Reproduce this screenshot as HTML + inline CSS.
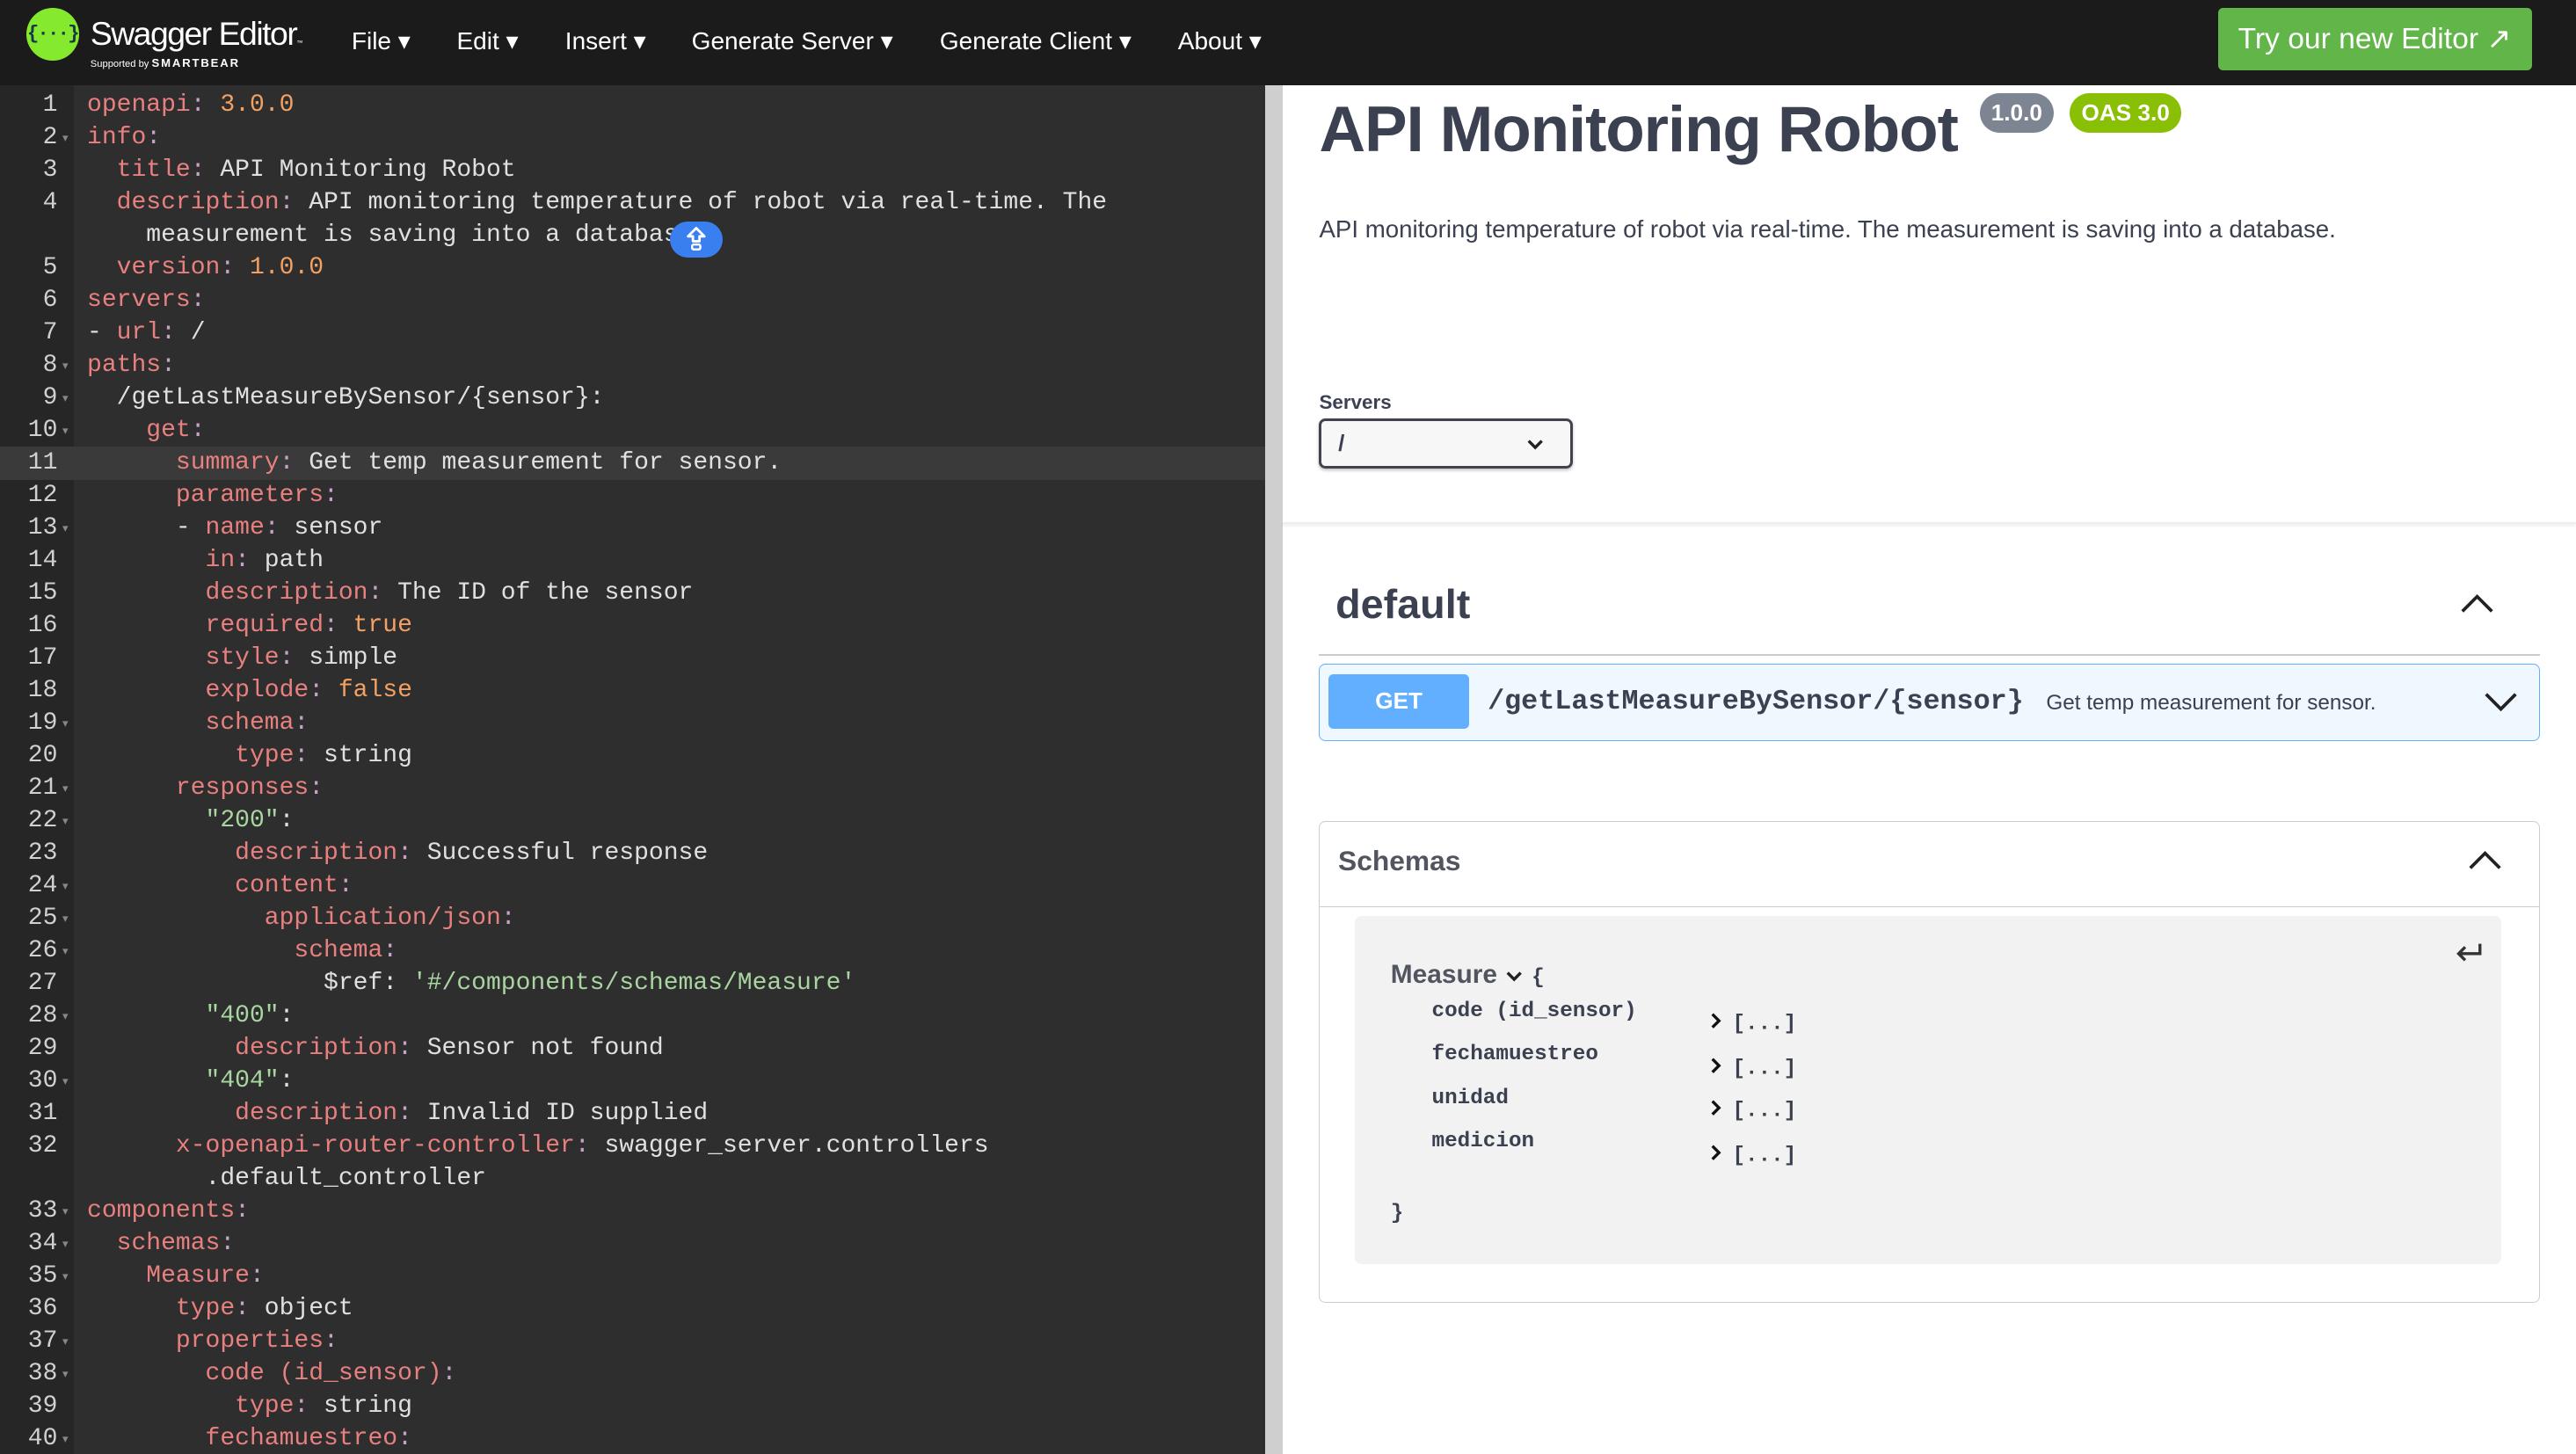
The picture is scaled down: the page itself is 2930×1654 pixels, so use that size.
<!DOCTYPE html>
<html><head><meta charset="utf-8">
<style>
html,body{margin:0;padding:0;background:#fff;overflow:hidden;width:2930px;height:1654px}
#w{zoom:1.8686;width:1568px;height:885px;position:relative;font-family:"Liberation Sans",sans-serif}
.nav{position:absolute;left:0;top:0;width:1568px;height:52px;background:#1b1b1b}
.logo{position:absolute;left:16px;top:5px;width:32px;height:32px;border-radius:50%;background:#85ea2d;color:#173647;font:bold 12px "Liberation Mono",monospace;text-align:center;line-height:32px;letter-spacing:-1px}
.brand{position:absolute;left:55px;top:9px;color:#fff;font-size:20px;letter-spacing:-.8px}
.sup{position:absolute;left:55px;top:34px;color:#fff;font-size:6px}
.sup b{font-size:7px;letter-spacing:1px}
.menu{position:absolute;top:16px;color:#fff;font-size:15px}
.try{position:absolute;left:1350px;top:5px;width:191px;height:38px;background:#62b548;border-radius:3px;color:#fff;font-size:18px;line-height:38px;text-align:center}
.ed{position:absolute;left:0;top:52px;width:770px;height:833px;background:#2e2e2e;overflow:hidden}
.gut{position:absolute;left:0;top:0;width:45px;height:833px;background:#262626}
.hl{position:absolute;left:0;top:220px;width:770px;height:20px;background:#3a3a3a}
.ln{position:absolute;left:0;width:35px;text-align:right;color:#d0d0d0;font:15px "Liberation Mono",monospace}
.fa{position:absolute;left:38px;color:#888;font-size:7px}
.code{position:absolute;left:53px;color:#e0e0e0;font:15px/19.8px "Liberation Mono",monospace;white-space:pre}
.k{color:#e8807f}.p{color:#c7a3c7}.n{color:#f2a063}.s{color:#a8d5a0}
.div{position:absolute;left:770px;top:52px;width:11px;height:833px;background:#cfcfcf}
.bub{position:absolute;left:408px;top:135px;width:32px;height:22px;border-radius:11px;background:#3a7ff0}
.rt{position:absolute;left:781px;top:52px;width:787px;height:833px;background:#fff;color:#3b4151}
h1{position:absolute;left:22px;top:5px;margin:0;font-size:39px;font-weight:bold;color:#3b4151;letter-spacing:-.6px}
.bd{position:absolute;top:5px;height:24px;line-height:24px;border-radius:12px;color:#fff;font-weight:bold;font-size:14px;padding:0 7px}
.desc{position:absolute;left:22px;top:79px;font-size:14.8px}
.srvl{position:absolute;left:22px;top:186px;font-size:12px;font-weight:bold}
.sel{position:absolute;left:22px;top:203px;width:151px;height:27px;border:2px solid #41444e;border-radius:4px;background:#f7f7f7;box-shadow:0 1px 2px rgba(0,0,0,.25)}
.sep{position:absolute;left:0;top:266px;width:787px;height:1px;background:#eee;box-shadow:0 1px 2px rgba(0,0,0,.12)}
.dft{position:absolute;left:32px;top:301px;font-size:25px;font-weight:bold}
.hr{position:absolute;left:22px;top:346px;width:743px;height:1px;background:#ccc}
.op{position:absolute;left:22px;top:352px;width:742px;height:46px;border:1px solid #61affe;border-radius:4px;background:#eff7ff}
.get{position:absolute;left:5px;top:6px;width:86px;height:33px;border-radius:3px;background:#61affe;color:#fff;font-weight:bold;font-size:14px;text-align:center;line-height:33px}
.path{position:absolute;left:102px;top:13px;font:bold 17px "Liberation Mono",monospace;color:#3b4151}
.sum{position:absolute;left:442px;top:16px;font-size:13px}
.sch{position:absolute;left:22px;top:448px;width:742px;height:292px;border:1px solid #ccc;border-radius:4px}
.schh{position:absolute;left:0;top:0;width:742px;height:51px;border-bottom:1px solid #ccc}
.box{position:absolute;left:21px;top:57px;width:698px;height:212px;background:#f2f2f2;border-radius:4px}
.mono{font-family:"Liberation Mono",monospace}
.pr{position:absolute;left:47px;font:bold 13px "Liberation Mono",monospace;color:#3b4151}
.ar{position:absolute;left:216px;font:bold 13px "Liberation Mono",monospace;color:#3b4151}
.ar svg{vertical-align:-1px;margin-right:6px}
</style></head><body><div id="w">
<div class="nav">
 <div class="logo">{···}</div>
 <div class="brand">Swagger Editor<span style="font-size:4px">™</span></div>
 <div class="sup">Supported by <b>SMARTBEAR</b></div>
 <div class="menu" style="left:214px">File ▾</div>
 <div class="menu" style="left:278px">Edit ▾</div>
 <div class="menu" style="left:344px">Insert ▾</div>
 <div class="menu" style="left:421px">Generate Server ▾</div>
 <div class="menu" style="left:572px">Generate Client ▾</div>
 <div class="menu" style="left:717px">About ▾</div>
 <div class="try">Try our new Editor ↗</div>
</div>
<div class="ed">
 <div class="gut"></div>
 <div class="hl"></div>
 <div class="ln" style="top:2px;font:15px/19.8px 'Liberation Mono',monospace;white-space:pre">1
2
3
4

5
6
7
8
9
10
11
12
13
14
15
16
17
18
19
20
21
22
23
24
25
26
27
28
29
30
31
32

33
34
35
36
37
38
39
40</div>
 <div class="fa" style="top:2px;font:7px/19.8px sans-serif;white-space:pre">
▾






▾
▾
▾


▾





▾

▾
▾

▾
▾
▾

▾

▾



▾
▾
▾

▾
▾

▾</div>
<div class="code" style="top:2px"><span class="k">openapi</span><span class="p">:</span> <span class="n">3.0.0</span>
<span class="k">info</span><span class="p">:</span>
  <span class="k">title</span><span class="p">:</span> API Monitoring Robot
  <span class="k">description</span><span class="p">:</span> API monitoring temperature of robot via real-time. The
    measurement is saving into a databas
  <span class="k">version</span><span class="p">:</span> <span class="n">1.0.0</span>
<span class="k">servers</span><span class="p">:</span>
- <span class="k">url</span><span class="p">:</span> /
<span class="k">paths</span><span class="p">:</span>
  /getLastMeasureBySensor/{sensor}:
    <span class="k">get</span><span class="p">:</span>
      <span class="k">summary</span><span class="p">:</span> Get temp measurement for sensor.
      <span class="k">parameters</span><span class="p">:</span>
      - <span class="k">name</span><span class="p">:</span> sensor
        <span class="k">in</span><span class="p">:</span> path
        <span class="k">description</span><span class="p">:</span> The ID of the sensor
        <span class="k">required</span><span class="p">:</span> <span class="n">true</span>
        <span class="k">style</span><span class="p">:</span> simple
        <span class="k">explode</span><span class="p">:</span> <span class="n">false</span>
        <span class="k">schema</span><span class="p">:</span>
          <span class="k">type</span><span class="p">:</span> string
      <span class="k">responses</span><span class="p">:</span>
        <span class="s">"200"</span>:
          <span class="k">description</span><span class="p">:</span> Successful response
          <span class="k">content</span><span class="p">:</span>
            <span class="k">application/json</span><span class="p">:</span>
              <span class="k">schema</span><span class="p">:</span>
                $ref: <span class="s">'#/components/schemas/Measure'</span>
        <span class="s">"400"</span>:
          <span class="k">description</span><span class="p">:</span> Sensor not found
        <span class="s">"404"</span>:
          <span class="k">description</span><span class="p">:</span> Invalid ID supplied
      <span class="k">x-openapi-router-controller</span><span class="p">:</span> swagger_server.controllers
        .default_controller
<span class="k">components</span><span class="p">:</span>
  <span class="k">schemas</span><span class="p">:</span>
    <span class="k">Measure</span><span class="p">:</span>
      <span class="k">type</span><span class="p">:</span> object
      <span class="k">properties</span><span class="p">:</span>
        <span class="k">code (id_sensor)</span><span class="p">:</span>
          <span class="k">type</span><span class="p">:</span> string
        <span class="k">fechamuestreo</span><span class="p">:</span></div>
</div>
<div class="bub"><svg width="32" height="22" viewBox="0 0 32 22"><path d="M16 4 L11 9 H14 V12 H18 V9 H21 Z" fill="none" stroke="#fff" stroke-width="1.5" stroke-linejoin="round"/><rect x="13.5" y="14" width="5" height="3" rx="1" fill="none" stroke="#fff" stroke-width="1.3"/></svg></div>
<div class="div"></div>
<div class="rt">
 <h1>API Monitoring Robot</h1>
 <div class="bd" style="left:424px;background:#7d8492">1.0.0</div>
 <div class="bd" style="left:479px;background:#89bf04">OAS 3.0</div>
 <div class="desc">API monitoring temperature of robot via real-time. The measurement is saving into a database.</div>
 <div class="srvl">Servers</div>
 <div class="sel"><span style="position:absolute;left:10px;top:5px;font-size:14px;font-weight:bold">/</span><svg style="position:absolute;left:124px;top:9px" width="12" height="10" viewBox="0 0 12 10"><path d="M2 3 L6 7 L10 3" fill="none" stroke="#222" stroke-width="1.8"/></svg></div>
 <div class="sep"></div>
 <div class="dft">default</div>
 <svg style="position:absolute;left:716px;top:308px" width="22" height="14" viewBox="0 0 22 14"><path d="M2 12 L11 3 L20 12" fill="none" stroke="#222" stroke-width="2"/></svg>
 <div class="hr"></div>
 <div class="op">
  <div class="get">GET</div>
  <div class="path">/getLastMeasureBySensor/{sensor}</div>
  <div class="sum">Get temp measurement for sensor.</div>
  <svg style="position:absolute;left:708px;top:16px" width="22" height="14" viewBox="0 0 22 14"><path d="M2 2 L11 11 L20 2" fill="none" stroke="#222" stroke-width="2"/></svg>
 </div>
 <div class="sch">
  <div class="schh"><span style="position:absolute;left:11px;top:14px;font-size:17px;font-weight:bold;color:#505560">Schemas</span>
  <svg style="position:absolute;left:698px;top:16px" width="22" height="14" viewBox="0 0 22 14"><path d="M2 12 L11 3 L20 12" fill="none" stroke="#222" stroke-width="2"/></svg></div>
  <div class="box">
   <svg style="position:absolute;left:668px;top:14px" width="20" height="16" viewBox="0 0 20 16"><path d="M17 3 V9 H4 M8 5 L4 9 L8 13" fill="none" stroke="#333" stroke-width="1.8"/></svg>
   <div style="position:absolute;left:22px;top:27px;font-size:16px;font-weight:bold;color:#505560">Measure <svg width="12" height="10" viewBox="0 0 12 10" style="vertical-align:-1px"><path d="M2 3 L6 7 L10 3" fill="none" stroke="#222" stroke-width="1.8"/></svg> <span class="mono" style="font-size:13px;color:#3b4151">{</span></div>
   <div class="pr" style="top:51px">code (id_sensor)</div>
   <div class="pr" style="top:77px">fechamuestreo</div>
   <div class="pr" style="top:104px">unidad</div>
   <div class="pr" style="top:130px">medicion</div>
   <div class="ar" style="top:58px"><svg width="8" height="12" viewBox="0 0 8 12"><path d="M2 2 L6 6 L2 10" fill="none" stroke="#111" stroke-width="1.8"/></svg>[...]</div>
   <div class="ar" style="top:85px"><svg width="8" height="12" viewBox="0 0 8 12"><path d="M2 2 L6 6 L2 10" fill="none" stroke="#111" stroke-width="1.8"/></svg>[...]</div>
   <div class="ar" style="top:111px"><svg width="8" height="12" viewBox="0 0 8 12"><path d="M2 2 L6 6 L2 10" fill="none" stroke="#111" stroke-width="1.8"/></svg>[...]</div>
   <div class="ar" style="top:138px"><svg width="8" height="12" viewBox="0 0 8 12"><path d="M2 2 L6 6 L2 10" fill="none" stroke="#111" stroke-width="1.8"/></svg>[...]</div>
   <div class="mono" style="position:absolute;left:22px;top:174px;font-size:13px;font-weight:bold;color:#3b4151">}</div>
  </div>
 </div>
</div>
</div></body></html>
